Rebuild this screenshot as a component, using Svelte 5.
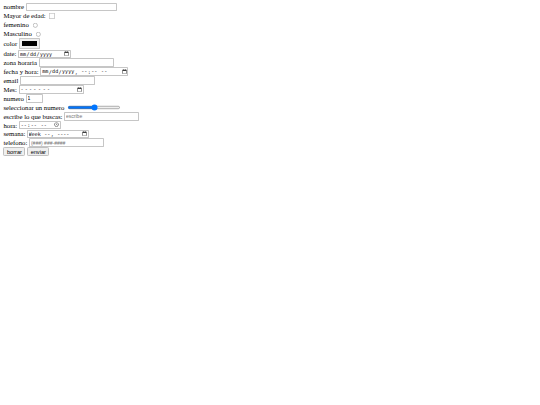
<script>
  let numero = $state(1);
</script>

<form class="form">
  <div class="fila"><label for="nombre">nombre</label><input id="nombre" class="largo" type="text" /></div>
  <div class="fila"><label for="edad">Mayor de edad:</label><input id="edad" class="marca" type="checkbox" /></div>
  <div class="fila"><label for="fem">femenino</label><input id="fem" class="marca" type="radio" name="sexo" /></div>
  <div class="fila"><label for="masc">Masculino</label><input id="masc" class="marca" type="radio" name="sexo" /></div>
  <div class="fila"><label for="color">color</label><input id="color" class="color" type="color" /></div>
  <div class="fila"><label for="fecha">date:</label><input id="fecha" class="fecha" type="date" /></div>
  <div class="fila"><label for="zona">zona horaria</label><input id="zona" class="campo" type="text" /></div>
  <div class="fila"><label for="fechahora">fecha y hora:</label><input id="fechahora" class="fechahora" type="datetime-local" /></div>
  <div class="fila"><label for="email">email</label><input id="email" class="campo" type="email" /></div>
  <div class="fila"><label for="mes">Mes:</label><input id="mes" class="mes" type="month" /></div>
  <div class="fila"><label for="numero">numero</label><input id="numero" class="numero" type="number" bind:value={numero} /></div>
  <div class="fila"><label for="rango">seleccionar un numero</label><input id="rango" class="marca" type="range" /></div>
  <div class="fila"><label for="buscar">escribe lo que buscas:</label><input id="buscar" class="campo" type="search" placeholder="escribe" /></div>
  <div class="fila"><label for="hora">hora:</label><input id="hora" class="hora" type="time" /></div>
  <div class="fila"><label for="semana">semana:</label><input id="semana" class="semana" type="week" /></div>
  <div class="fila"><label for="telefono">telefono:</label><input id="telefono" class="campo" type="tel" placeholder="(###) ###-####" /></div>
  <div class="fila"><button type="reset">borrar</button><button type="submit">enviar</button></div>
</form>

<style>
  :global(body) {
    margin: 0;
  }
  .form {
    zoom: 0.4219;
    padding: 6px 8px;
    font-family: "Liberation Serif", serif;
    font-size: 16px;
  }
  .fila {
    display: flex;
    align-items: center;
    column-gap: 4px;
    min-height: 21.1px;
  }
  input:not(.marca) {
    box-sizing: border-box;
    height: 21px;
    font-size: 12px;
    border: 1px solid #c6c6c6;
    border-radius: 2px;
  }
  button {
    height: 21px;
    border: 1px solid #c0c0c0;
    border-radius: 3px;
    background: #efefef;
  }
  input.color {
    height: 27px;
    width: 50px;
  }
  .color::-webkit-color-swatch {
    border: none;
  }
  input.campo { width: 178px; }
  input.largo { width: 216px; }
  input.numero { width: 40px; }
  input.fecha { width: 126px; }
  input.fechahora { width: 209px; }
  input.mes { width: 154px; }
  input.hora { width: 100px; }
  input.semana { width: 147px; }
  .mes::-webkit-datetime-edit {
    letter-spacing: 3px;
  }
</style>
